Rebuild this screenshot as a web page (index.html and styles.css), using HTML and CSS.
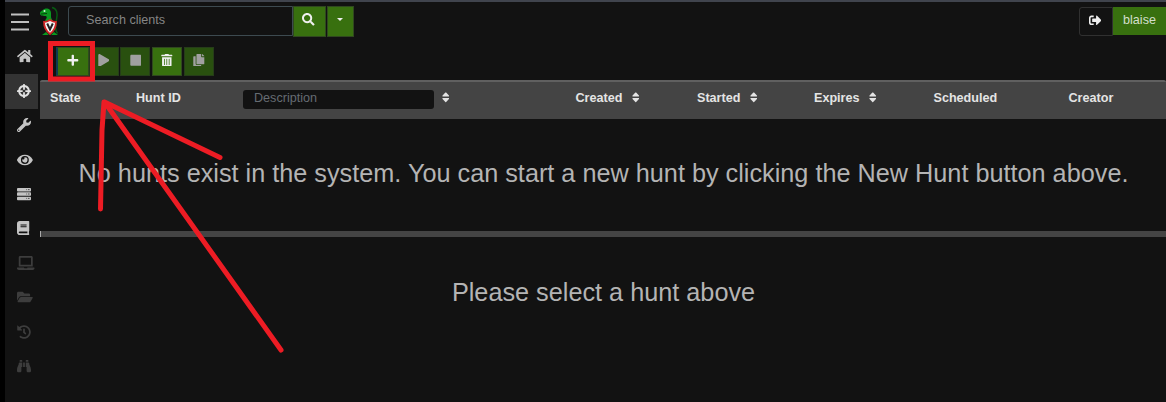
FILE: index.html
```
<!DOCTYPE html>
<html lang="en">
<head>
<meta charset="utf-8">
<title>Hunts</title>
<link rel="stylesheet" href="styles.css">
</head>
<body>
<svg class="defs" width="0" height="0">
  <symbol id="sort" viewBox="0 0 320 512" preserveAspectRatio="none"><path d="M41 288h238c21.4 0 32.1 25.9 17 41L177 448c-9.4 9.4-24.6 9.4-33.9 0L24 329c-15.1-15.1-4.4-41 17-41zm255-105L177 64c-9.4-9.4-24.6-9.4-33.9 0L24 183c-15.1 15.1-4.4 41 17 41h238c21.4 0 32.1-25.9 17-41z"/></symbol>
</svg>
<div class="app">
  <header class="topbar">
    <svg class="burger" viewBox="0 0 18 18"><path d="M0 1.5h18M0 9h18M0 16.5h18"/></svg>
    <svg class="logo" viewBox="0 0 20 30">
      <path d="M12 1.500c5 1 6 6 4.500 12s-2 10 1 14" fill="none" stroke="#075a12" stroke-width="1.500"/>
      <path d="M0 7.500c0-2 1-2.500 3-3.500 2-2.500 8-2 8 3v4c0 2 2 3 2 5H5c0-3 3-4 1-6-2 0-6 0-6-2.500z" fill="#0b9a20"/>
      <path d="M1 8l6-.5" stroke="#07420b"/>
      <circle cx="4.500" cy="5" r="1" fill="#d9f5d9"/>
      <path d="M2 29l4-3 3 3zM11 29l3-3 4 3z" fill="#0b9a20"/>
      <path d="M4 16q3 0 6-2 3 2 6 2c0 6-2 9-6 12-4-3-6-6-6-12z" fill="#f5f5f5" stroke="#d02525" stroke-width="1.800"/>
      <path d="M7.200 17.500l2.800 6 2.800-6" fill="none" stroke="#222" stroke-width="2"/>
    </svg>
    <div class="search">
      <div class="search-input">Search clients</div>
      <div class="btn search-btn"><svg class="ic" viewBox="0 0 512 512"><path d="M505 442.700L405.300 343c-4.500-4.500-10.600-7-17-7H372c27.600-35.300 44-79.700 44-128C416 93.100 322.900 0 208 0S0 93.100 0 208s93.100 208 208 208c48.300 0 92.700-16.400 128-44v16.300c0 6.400 2.500 12.500 7 17l99.700 99.700c9.400 9.400 24.600 9.400 33.900 0l28.300-28.300c9.400-9.400 9.400-24.600.1-34zM208 336c-70.700 0-128-57.200-128-128 0-70.700 57.200-128 128-128 70.700 0 128 57.200 128 128 0 70.700-57.200 128-128 128z"/></svg></div>
      <div class="btn drop-btn"><span class="caret"></span></div>
    </div>
    <div class="user">
      <div class="logout"><svg class="ic" viewBox="0 0 512 512"><path d="M497 273L329 441c-15 15-41 4.500-41-17v-96H152c-13.300 0-24-10.700-24-24v-96c0-13.300 10.700-24 24-24h136V88c0-21.400 25.900-32 41-17l168 168c9.300 9.400 9.300 24.600 0 34zM192 436v-40c0-6.600-5.400-12-12-12H96c-17.700 0-32-14.300-32-32V160c0-17.700 14.300-32 32-32h84c6.600 0 12-5.400 12-12V76c0-6.600-5.400-12-12-12H96c-53 0-96 43-96 96v192c0 53 43 96 96 96h84c6.600 0 12-5.400 12-12z"/></svg></div>
      <div class="name">blaise</div>
    </div>
  </header>
  <div class="body">
    <nav class="sidebar">
      <div class="item"><svg class="w16" viewBox="0 0 576 512"><path d="M280.370 148.260L96 300.110V464a16 16 0 0 0 16 16l112.060-.29a16 16 0 0 0 15.920-16V368a16 16 0 0 1 16-16h64a16 16 0 0 1 16 16v95.640a16 16 0 0 0 16 16.050L464 480a16 16 0 0 0 16-16V300L295.670 148.260a12.190 12.190 0 0 0-15.300 0zM571.600 251.470L488 182.560V44.050a12 12 0 0 0-12-12h-56a12 12 0 0 0-12 12v72.610L318.470 43a48 48 0 0 0-61 0L4.340 251.470a12 12 0 0 0-1.600 16.900l25.500 31A12 12 0 0 0 45.150 301l235.220-193.740a12.190 12.190 0 0 1 15.300 0L530.900 301a12 12 0 0 0 16.900-1.600l25.500-31a12 12 0 0 0-1.700-16.930z"/></svg></div>
      <div class="item active"><svg class="w14" viewBox="0 0 512 512"><path fill="none" stroke="currentColor" stroke-width="74" d="M256 76a180 180 0 1 0 .1 0z"/><path d="M224 12q0-12 12-12h40q12 0 12 12v196h-64zM224 304h64v196q0 12-12 12h-40q-12 0-12-12zM0 236q0-12 12-12h196v64H12q-12 0-12-12zM304 224h196q12 0 12 12v40q0 12-12 12H304z"/></svg></div>
      <div class="item"><svg class="w14" viewBox="0 0 512 512"><path d="M507.730 109.100c-2.240-9.030-13.540-12.090-20.120-5.510l-74.360 74.360-67.880-11.310-11.310-67.880 74.360-74.360c6.620-6.620 3.430-17.900-5.660-20.160-47.380-11.740-99.550.91-136.580 37.930-39.640 39.640-50.550 97.100-34.050 147.200L18.740 402.760c-24.990 24.990-24.990 65.510 0 90.500 24.990 24.990 65.510 24.990 90.500 0l213.210-213.210c50.120 16.710 107.470 5.680 147.370-34.220 37.070-37.070 49.700-89.320 37.910-136.730zM64 472c-13.250 0-24-10.750-24-24 0-13.260 10.750-24 24-24s24 10.740 24 24c0 13.250-10.750 24-24 24z"/></svg></div>
      <div class="item"><svg class="w16" viewBox="0 0 576 512"><path d="M572.520 241.400C518.290 135.590 410.930 64 288 64S57.680 135.640 3.480 241.410a32.350 32.350 0 0 0 0 29.190C57.710 376.410 165.070 448 288 448s230.320-71.640 284.520-177.410a32.350 32.350 0 0 0 0-29.190zM288 400a144 144 0 1 1 144-144 143.930 143.930 0 0 1-144 144zm0-240a95.310 95.310 0 0 0-25.310 3.790 47.850 47.850 0 0 1-66.900 66.900A95.780 95.780 0 1 0 288 160z"/></svg></div>
      <div class="item"><svg class="w14" viewBox="0 0 512 512"><rect y="32" width="512" height="128" rx="32"/><rect y="192" width="512" height="128" rx="32"/><rect y="352" width="512" height="128" rx="32"/><path class="slot" d="M344 96h24M408 96h48M344 256h24M408 256h48M344 416h24M408 416h48"/></svg></div>
      <div class="item"><svg class="w12" viewBox="0 0 448 512"><path d="M448 360V24c0-13.300-10.700-24-24-24H96C43 0 0 43 0 96v320c0 53 43 96 96 96h328c13.300 0 24-10.700 24-24v-16c0-7.500-3.500-14.300-8.900-18.700-4.200-15.400-4.200-59.300 0-74.700 5.400-4.300 8.900-11.100 8.900-18.600zM128 134c0-3.300 2.700-6 6-6h212c3.300 0 6 2.700 6 6v20c0 3.300-2.700 6-6 6H134c-3.300 0-6-2.700-6-6v-20zm0 64c0-3.300 2.700-6 6-6h212c3.300 0 6 2.700 6 6v20c0 3.300-2.700 6-6 6H134c-3.300 0-6-2.700-6-6v-20zm253.400 250H96c-17.700 0-32-14.300-32-32 0-17.600 14.400-32 32-32h285.400c-1.900 17.100-1.900 46.900 0 64z"/></svg></div>
      <div class="item off"><svg class="w17" viewBox="0 0 640 512"><path d="M624 416H381.540c-.74 19.810-14.710 32-32.740 32H288c-18.690 0-33.020-17.470-32.770-32H16c-8.800 0-16 7.200-16 16v16c0 35.200 28.800 64 64 64h512c35.200 0 64-28.800 64-64v-16c0-8.800-7.200-16-16-16zM576 48c0-26.400-21.600-48-48-48H112C85.600 0 64 21.600 64 48v336h512V48zm-64 272H128V64h384v256z"/></svg></div>
      <div class="item off"><svg class="w16" viewBox="0 0 576 512"><path d="M572.694 292.093L500.270 416.248A63.997 63.997 0 0 1 444.989 448H45.025c-18.523 0-30.064-20.093-20.731-36.093l72.424-124.155A64 64 0 0 1 152 256h399.964c18.523 0 30.064 20.093 20.730 36.093zM152 224h328v-48c0-26.510-21.490-48-48-48H272l-64-64H48C21.490 64 0 85.490 0 112v278.046l69.077-118.418C86.214 242.250 117.989 224 152 224z"/></svg></div>
      <div class="item off"><svg class="w14" viewBox="0 0 512 512"><path d="M504 255.531c.253 136.640-111.180 248.372-247.820 248.468-59.015.042-113.223-20.530-155.822-54.911-11.077-8.940-11.905-25.541-1.839-35.607l11.267-11.267c8.609-8.609 22.353-9.551 31.891-1.984C173.062 425.135 212.781 440 256 440c101.705 0 184-82.311 184-184 0-101.705-82.311-184-184-184-48.814 0-93.149 18.969-126.068 49.932l50.754 50.754c10.080 10.080 2.941 27.314-11.313 27.314H24c-8.837 0-16-7.163-16-16V38.627c0-14.254 17.234-21.393 27.314-11.314l49.372 49.372C129.209 34.136 189.552 8 256 8c136.810 0 247.747 110.780 248 247.531zm-180.912 78.784l9.823-12.630c8.138-10.463 6.253-25.542-4.210-33.679L288 256.349V152c0-13.255-10.745-24-24-24h-16c-13.255 0-24 10.745-24 24v135.651l65.409 50.874c10.463 8.137 25.541 6.253 33.679-4.210z"/></svg></div>
      <div class="item off"><svg class="w14" viewBox="0 0 512 512"><path d="M416 48c0-8.840-7.160-16-16-16h-64c-8.840 0-16 7.160-16 16v48h96V48zM63.910 159.990C61.400 253.840 3.460 274.220 0 404v44c0 17.670 14.330 32 32 32h96c17.670 0 32-14.330 32-32V288h32V128H95.840c-17.630 0-31.450 14.370-31.930 31.990zm384.180 0c-.48-17.620-14.300-31.990-31.930-31.990H320v160h32v160c0 17.670 14.330 32 32 32h96c17.670 0 32-14.330 32-32v-44c-3.460-129.780-61.400-150.160-63.910-244.010zM176 32h-64c-8.840 0-16 7.160-16 16v48h96V48c0-8.840-7.160-16-16-16zm48 256h64V128h-64v160z"/></svg></div>
    </nav>
    <main class="main">
      <div class="toolbar">
        <div class="btn new"><svg class="ic11" viewBox="0 0 448 512"><path d="M416 208H272V64c0-17.670-14.330-32-32-32h-32c-17.670 0-32 14.330-32 32v144H32c-17.670 0-32 14.330-32 32v32c0 17.670 14.330 32 32 32h144v144c0 17.670 14.330 32 32 32h32c17.670 0 32-14.330 32-32V304h144c17.670 0 32-14.330 32-32v-32c0-17.670-14.330-32-32-32z"/></svg></div>
        <div class="btn dim"><svg class="ic11" viewBox="0 0 448 512"><path d="M424.400 214.700L72.400 6.600C43.800-10.300 0 6.100 0 47.900V464c0 37.500 40.700 60.100 72.400 41.300l352-208c31.400-18.500 31.500-64.100 0-82.600z"/></svg></div>
        <div class="btn dim"><svg class="ic11" viewBox="0 0 448 512"><path d="M400 32H48C21.500 32 0 53.500 0 80v352c0 26.500 21.500 48 48 48h352c26.500 0 48-21.500 48-48V80c0-26.500-21.500-48-48-48z"/></svg></div>
        <div class="btn"><svg class="ic11" viewBox="0 0 448 512"><path d="M32 464a48 48 0 0 0 48 48h288a48 48 0 0 0 48-48V128H32zm272-256a16 16 0 0 1 32 0v224a16 16 0 0 1-32 0zm-96 0a16 16 0 0 1 32 0v224a16 16 0 0 1-32 0zm-96 0a16 16 0 0 1 32 0v224a16 16 0 0 1-32 0zM432 32H312l-9.400-18.700A24 24 0 0 0 281.100 0H166.800a23.720 23.720 0 0 0-21.400 13.300L136 32H16A16 16 0 0 0 0 48v32a16 16 0 0 0 16 16h416a16 16 0 0 0 16-16V48a16 16 0 0 0-16-16z"/></svg></div>
        <div class="btn dim"><svg class="ic11" viewBox="0 0 448 512"><path d="M320 448v40c0 13.255-10.745 24-24 24H24c-13.255 0-24-10.745-24-24V120c0-13.255 10.745-24 24-24h72v296c0 30.879 25.121 56 56 56h168zm0-344V0H152c-13.255 0-24 10.745-24 24v368c0 13.255 10.745 24 24 24h272c13.255 0 24-10.745 24-24V128H344c-13.200 0-24-10.800-24-24zm120.971-31.029L375.029 7.029A24 24 0 0 0 358.059 0H352v96h96v-6.059a24 24 0 0 0-7.029-16.970z"/></svg></div>
      </div>
      <div class="thead">
        <div class="th">State</div>
        <div class="th">Hunt ID</div>
        <div class="th wide"><span class="filter">Description</span><svg class="sort"><use href="#sort"/></svg></div>
        <div class="th">Created<svg class="sort"><use href="#sort"/></svg></div>
        <div class="th">Started<svg class="sort"><use href="#sort"/></svg></div>
        <div class="th">Expires<svg class="sort"><use href="#sort"/></svg></div>
        <div class="th">Scheduled</div>
        <div class="th">Creator</div>
      </div>
      <div class="empty">No hunts exist in the system. You can start a new hunt by clicking the New Hunt button above.</div>
      <div class="splitter"></div>
      <div class="hint">Please select a hunt above</div>
    </main>
  </div>
</div>
<svg class="marks" viewBox="0 0 1166 402">
  <rect x="50.500" y="43.500" width="42" height="35.500"/>
  <path d="M281 350L104.500 102L220 157.500M104 102L102 130L100.500 209"/>
</svg>
</body>
</html>
```

FILE: styles.css
```
* { box-sizing: border-box; }
body {
  margin: 0;
  background: #000;
  color: #b4b4b4;
  font-family: "Liberation Sans", Arial, sans-serif;
  font-size: 12.6px;
}
svg { display: block; fill: currentColor; flex: none; }
.defs { position: absolute; }
.app {
  height: 402px;
  margin-left: 5px;
  background: #121212;
  border-top: 2px solid #40444d;
  overflow: hidden;
}
.topbar {
  height: 38px;
  display: flex;
  align-items: flex-start;
  padding: 4px 0 0 5.5px;
}
.burger { width: 18px; height: 18px; margin-top: 7px; stroke: #c0c0c0; stroke-width: 2; }
.logo { width: 20px; height: 30px; margin-left: 11.5px; }
.search { display: flex; margin-left: 8px; }
.search-input {
  width: 225px;
  height: 30px;
  border: 1px solid #3d4a50;
  border-radius: 3px 0 0 3px;
  padding-left: 17px;
  line-height: 26px;
  color: #858585;
}
.btn {
  display: flex;
  align-items: center;
  justify-content: center;
  background: #38700f;
  border: 1px solid #30481f;
  color: #f0f0f0;
}
.search-btn { width: 33px; height: 31px; padding-bottom: 4px; padding-right: 2px; }
.drop-btn { width: 27px; height: 31px; margin-left: 1px; padding-bottom: 4px; padding-right: 1px; }
.caret { border: 3.5px solid transparent; border-top-color: #eee; border-bottom: 0; }
.ic { width: 12.6px; height: 12.6px; }
.ic11 { width: 11.600px; height: 12.6px; }
.user { display: flex; margin: 1px 0 0 auto; }
.logout {
  width: 34px;
  height: 29px;
  display: flex;
  align-items: center;
  justify-content: center;
  padding-right: 2px;
  padding-bottom: 3px;
  border: 1px solid #303030;
  border-radius: 3px 0 0 3px;
  color: #eee;
}
.name {
  width: 53px;
  height: 28px;
  line-height: 26px;
  text-align: center;
  background: #38700f;
  color: #d4dfcc;
}
.body { display: flex; height: 362px; }
.sidebar { width: 33px; flex: none; display: flex; flex-direction: column; }
.item {
  height: 34.45px;
  display: flex;
  align-items: center;
  padding-left: 12.300px;
  padding-bottom: 2px;
  color: #c4c4c4;
}
.item.active { background: #333; color: #e2e2e2; }
.item.off { color: #3d3d3d; }
.w12, .w14, .w16, .w17 { height: 14px; }
.w12 { width: 12.250px; }
.w14 { width: 14px; }
.w16 { width: 15.750px; }
.w17 { width: 17.500px; }
.slot { stroke: #333; stroke-width: 36; }
.main { flex: 1; margin-left: 2px; }
.toolbar { height: 40px; display: flex; gap: 1.7px; padding: 7px 0 0 16px; }
.toolbar .btn { width: 30px; height: 29px; padding-bottom: 3px; }
.toolbar .new { width: 33px; margin-right: -2px; border-left: 2px solid #0e3a50; }
.toolbar .dim { background: #29500f; border-color: #263d19; color: #a0a0a0; }
.thead {
  height: 39px;
  display: grid;
  grid-template-columns: 86px 107px 332.500px 121.500px 117px 119.500px 135px 1fr;
  padding-left: 10px;
  background: #444;
  border-top: 2px solid #606060;
  border-radius: 2px 2px 0 0;
  font-weight: bold;
  color: #e4e4e4;
}
.th { display: flex; align-items: center; height: 31px; }
.sort { width: 7.500px; height: 12.600px; margin-left: 9.500px; }
.wide .sort { margin-left: 8px; }
.filter {
  width: 191px;
  height: 19px;
  margin-top: 3px;
  border-radius: 3px;
  background: #121212;
  padding-left: 11px;
  line-height: 17px;
  font-weight: normal;
  color: #666c72;
}
.empty, .hint { text-align: center; font-size: 25.25px; white-space: nowrap; padding-left: 1px; }
.empty { height: 112px; line-height: 109px; }
.splitter { height: 6px; background: #444; border-left: 1px solid #aaa; }
.hint { line-height: 111px; }
.marks {
  position: absolute;
  left: 0;
  top: 0;
  width: 1166px;
  height: 402px;
  fill: none;
  stroke: #ed1c24;
  stroke-width: 5;
  stroke-linecap: round;
  stroke-linejoin: round;
}
.marks rect { stroke-linejoin: miter; }
```
